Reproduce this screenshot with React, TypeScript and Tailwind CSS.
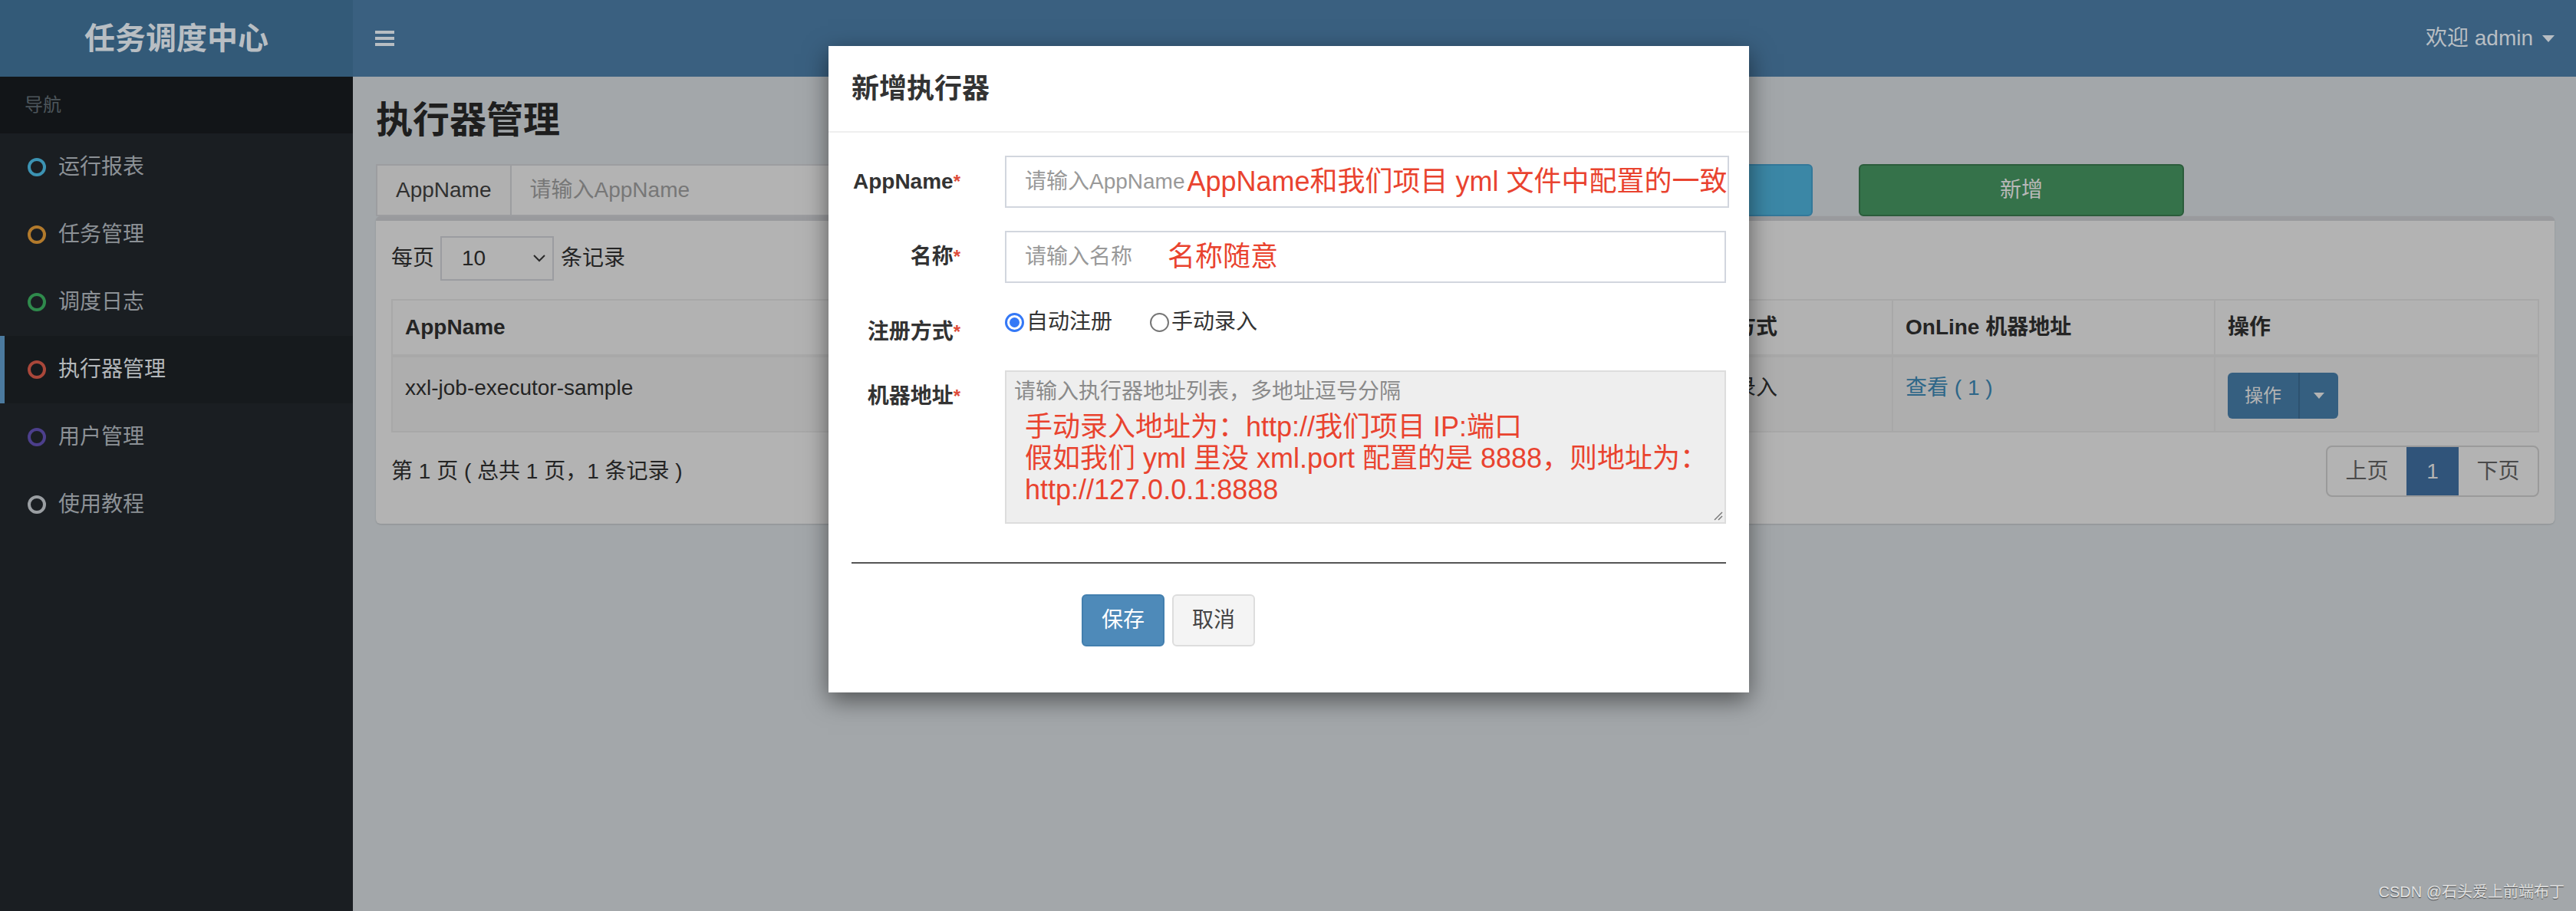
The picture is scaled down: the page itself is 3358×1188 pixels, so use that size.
import React from "react";

const navItems = [
  { label: "运行报表", ring: "border-[#3c93b3]" },
  { label: "任务管理", ring: "border-[#b27a2c]" },
  { label: "调度日志", ring: "border-[#2f8a4c]" },
  { label: "执行器管理", ring: "border-[#a9473a]", active: true },
  { label: "用户管理", ring: "border-[#4c3f8c]" },
  { label: "使用教程", ring: "border-[#9a9ea2]" },
];

// columns hidden behind the modal keep their width but no text
const columns = ["AppName", "", "", "注册方式", "OnLine 机器地址", "操作"];

function Caret({ className }: { className: string }) {
  return <span className={`inline-block w-0 h-0 border-x-transparent ${className}`} />;
}

function Header() {
  return (
    <header className="flex h-[100px]">
      <div className="w-[460px] shrink-0 bg-[#335a78] flex items-center justify-center text-[40px] font-bold text-[#b8bec3]">
        任务调度中心
      </div>
      <div className="flex-1 bg-[#3a6080] flex items-center justify-between pl-[29px] pr-[28px]">
        <div className="w-[25px] flex flex-col gap-[4px]">
          <span className="h-[4px] bg-[#b8bec3]" />
          <span className="h-[4px] bg-[#b8bec3]" />
          <span className="h-[4px] bg-[#b8bec3]" />
        </div>
        <div className="flex items-center gap-[12px] text-[28px] text-[#b8bec3]">
          <span>欢迎 admin</span>
          <Caret className="border-x-[8px] border-t-[9px] border-t-[#b8bec3]" />
        </div>
      </div>
    </header>
  );
}

function Sidebar() {
  return (
    <aside className="w-[460px] shrink-0 bg-[#1a1e22]">
      <div className="h-[74px] bg-[#121518] pl-[32px] flex items-center text-[24px] text-[#4d555b]">
        导航
      </div>
      {navItems.map((item) => (
        <div
          key={item.label}
          className={`h-[88px] flex items-center gap-[16px] pl-[30px] border-l-[6px] text-[28px] ${
            item.active
              ? "border-[#4b7a9f] bg-[#161a1d] text-[#b4b8bb]"
              : "border-transparent text-[#8c9196]"
          }`}
        >
          <span className={`w-[24px] h-[24px] rounded-full border-[4px] ${item.ring}`} />
          <span>{item.label}</span>
        </div>
      ))}
    </aside>
  );
}

function Content() {
  return (
    <main className="flex-1 px-[30px] pt-[30px]">
      <h1 className="text-[48px] leading-[53px] font-bold text-[#1e1e1e]">执行器管理</h1>

      <div className="-mx-[30px] mt-[31px] flex">
        <div className="w-3/12 px-[30px]">
          <div className="flex h-[68px] border-2 border-[#9c9da0]">
            <span className="px-[24px] flex items-center bg-[#b0b0b0] border-r-2 border-[#9c9da0] text-[#303030]">
              AppName
            </span>
            <span className="flex-1 pl-[24px] flex items-center bg-[#b3b3b3] text-[#777]">请输入AppName</span>
          </div>
        </div>
        <div className="w-3/12 px-[30px]">
          <div className="h-[68px] border-2 border-[#9c9da0] bg-[#b3b3b3]" />
        </div>
        <div className="w-2/12 px-[30px]">
          <div className="h-[68px] rounded-[6px] border-2 border-[#33789a] bg-[#3b87a6]" />
        </div>
        <div className="w-2/12 px-[30px]">
          <div className="h-[68px] rounded-[6px] border-2 border-[#2b5c3b] bg-[#35724a] flex items-center justify-center text-[#b8b8b8]">
            新增
          </div>
        </div>
      </div>

      <div className="rounded-[6px] border-t-[6px] border-[#999a9d] bg-[#b3b3b3] shadow-[0_1px_2px_rgba(0,0,0,0.15)] px-[20px] pt-[20px] pb-[35px]">
        <div className="flex items-center h-[58px] text-[#242424]">
          <span>每页</span>
          <div className="ml-[8px] w-[148px] h-[58px] border-2 border-[#9b9ca0] flex items-center justify-between pl-[26px] pr-[8px]">
            <span>10</span>
            <svg width="18" height="10" viewBox="0 0 18 10">
              <polyline points="2,1 9,8 16,1" fill="none" stroke="#2a2a2a" strokeWidth="2" />
            </svg>
          </div>
          <span className="ml-[9px]">条记录</span>
        </div>

        <table className="mt-[24px] w-full border-collapse table-fixed text-[#242424]">
          <colgroup>
            <col className="w-[669px]" />
            <col className="w-[520px]" />
            <col className="w-[488px]" />
            <col className="w-[279px]" />
            <col className="w-[420px]" />
            <col className="w-[422px]" />
          </colgroup>
          <thead>
            <tr className="h-[73px] bg-[#b2b2b2]">
              {columns.map((h, i) => (
                <th key={i} className="border-2 border-[#a8a8a8] border-b-4 px-[16px] text-left font-bold">
                  {h}
                </th>
              ))}
            </tr>
          </thead>
          <tbody>
            <tr className="h-[99px] bg-[#aeaeae]">
              <td className="border-2 border-[#a8a8a8] px-[16px] pt-[20px] align-top leading-[40px]">
                xxl-job-executor-sample
              </td>
              <td className="border-2 border-[#a8a8a8]" />
              <td className="border-2 border-[#a8a8a8]" />
              <td className="border-2 border-[#a8a8a8] px-[16px] pt-[20px] align-top leading-[40px]">手动录入</td>
              <td className="border-2 border-[#a8a8a8] px-[16px] pt-[20px] align-top leading-[40px] text-[#2d6688]">
                查看 ( 1 )
              </td>
              <td className="border-2 border-[#a8a8a8] px-[16px] pt-[20px] align-top">
                <div className="inline-flex h-[60px] rounded-[6px] bg-[#355f80] text-[24px] text-[#b3b3b3]">
                  <span className="px-[22px] flex items-center border-r-2 border-[#2d5270]">操作</span>
                  <span className="w-[50px] flex items-center justify-center">
                    <Caret className="border-x-[7px] border-t-[8px] border-t-[#b3b3b3]" />
                  </span>
                </div>
              </td>
            </tr>
          </tbody>
        </table>

        <div className="mt-[17px] flex items-center justify-between text-[#242424]">
          <span>第 1 页 ( 总共 1 页，1 条记录 )</span>
          <div className="flex h-[67px] border-2 border-[#9a9a9a] rounded-[8px] overflow-hidden text-[#4a4a4a]">
            <span className="w-[103px] flex items-center justify-center">上页</span>
            <span className="w-[68px] flex items-center justify-center bg-[#30547a] text-[#b3b3b3]">1</span>
            <span className="w-[103px] flex items-center justify-center">下页</span>
          </div>
        </div>
      </div>
    </main>
  );
}

function Label({ text }: { text: string }) {
  return (
    <div className="w-[170px] shrink-0 pr-[28px] pt-[14px] text-right font-bold leading-[40px] text-[#333]">
      {text}
      <span className="text-[#dd4b39] text-[24px] align-top">*</span>
    </div>
  );
}

function Modal() {
  return (
    <div className="absolute left-[1080px] top-[60px] w-[1200px] bg-white shadow-[0_10px_30px_rgba(0,0,0,0.5)]">
      <div className="p-[30px] border-b-2 border-[#efefef]">
        <h4 className="text-[36px] leading-[51px] font-bold text-[#333]">新增执行器</h4>
      </div>
      <div className="px-[30px] pt-[30px] pb-[60px]">
        <div className="flex mb-[30px]">
          <Label text="AppName" />
          <div className="flex-1 pl-[30px]">
            <div className="h-[68px] border-2 border-[#d2d6de] flex items-center pl-[24px] whitespace-nowrap">
              <span className="text-[#999]">请输入AppName</span>
              <span className="ml-[3px] text-[36px] text-[#e9432f]">AppName和我们项目 yml 文件中配置的一致</span>
            </div>
          </div>
        </div>

        <div className="flex mb-[30px]">
          <Label text="名称" />
          <div className="flex-1 pl-[30px]">
            <div className="h-[68px] border-2 border-[#d2d6de] flex items-center pl-[24px] whitespace-nowrap">
              <span className="text-[#999]">请输入名称</span>
              <span className="ml-[46px] text-[36px] text-[#e9432f]">名称随意</span>
            </div>
          </div>
        </div>

        <div className="flex mb-[30px]">
          <Label text="注册方式" />
          <div className="flex-1 pl-[30px] h-[42px] flex items-center text-[#333]">
            <span className="w-[25px] h-[25px] rounded-full border-[3px] border-[#3478f6] bg-white flex items-center justify-center">
              <span className="w-[13px] h-[13px] rounded-full bg-[#3478f6]" />
            </span>
            <span className="ml-[3px]">自动注册</span>
            <span className="ml-[49px] w-[25px] h-[25px] rounded-full border-2 border-[#767676] bg-white" />
            <span className="ml-[3px]">手动录入</span>
          </div>
        </div>

        <div className="flex">
          <Label text="机器地址" />
          <div className="flex-1 pl-[30px]">
            <div className="relative h-[200px] bg-[#eeeeee] border-2 border-[#dddddd] pl-[10px] pt-[6px]">
              <div className="leading-[40px] text-[#8a8a8a]">请输入执行器地址列表，多地址逗号分隔</div>
              <div className="mt-[5px] ml-[14px] text-[36px] leading-[41px] text-[#e9432f]">
                <div>手动录入地址为：http://我们项目 IP:端口</div>
                <div>假如我们 yml 里没 xml.port 配置的是 8888，则地址为：</div>
                <div>http://127.0.0.1:8888</div>
              </div>
              <svg className="absolute right-[2px] bottom-[2px]" width="14" height="14" viewBox="0 0 14 14">
                <line x1="13" y1="3" x2="3" y2="13" stroke="#777" strokeWidth="1.5" />
                <line x1="13" y1="8" x2="8" y2="13" stroke="#777" strokeWidth="1.5" />
              </svg>
            </div>
          </div>
        </div>

        <div className="mt-[50px] h-[2px] bg-[#555]" />

        <div className="mt-[40px] pl-[300px] flex gap-[10px]">
          <div className="h-[68px] px-[24px] rounded-[6px] bg-[#4e8ab9] border-2 border-[#437fae] flex items-center text-white">
            保存
          </div>
          <div className="h-[68px] px-[24px] rounded-[6px] bg-[#f4f4f4] border-2 border-[#dddddd] flex items-center text-[#444]">
            取消
          </div>
        </div>
      </div>
    </div>
  );
}

export default function App() {
  return (
    <div className="relative w-[3358px] h-[1188px] overflow-hidden bg-[#a3a7aa] text-[28px] font-['Liberation_Sans','Noto_Sans_CJK_SC',sans-serif]">
      <Header />
      <div className="flex h-[1088px]">
        <Sidebar />
        <Content />
      </div>
      <Modal />
      <div className="absolute right-[15px] bottom-[10px] text-[20px] text-[#e2e2e2] [text-shadow:0_1px_1px_rgba(0,0,0,0.6)]">
        CSDN @石头爱上前端布丁
      </div>
    </div>
  );
}
